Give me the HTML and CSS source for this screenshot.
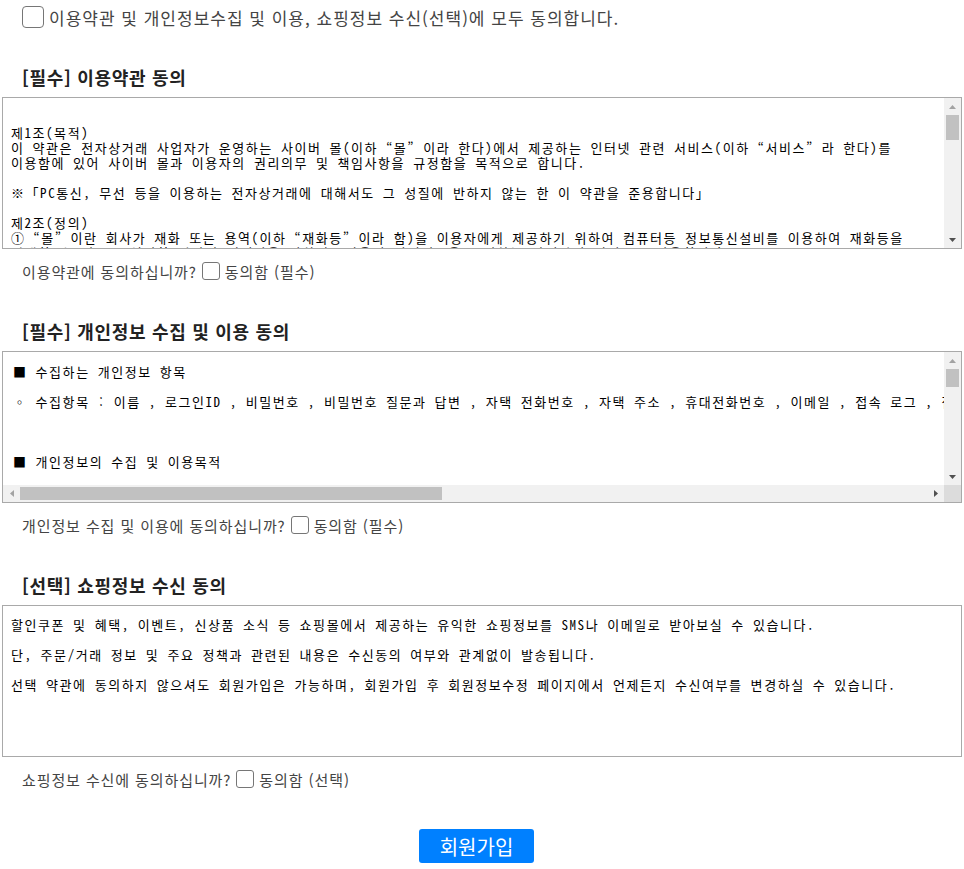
FILE: index.html
```html
<!DOCTYPE html>
<html lang="ko">
<head>
    <meta charset="UTF-8">
    <meta name="viewport" content="width=device-width, initial-scale=1.0">
    <title>회원가입 약관동의</title>
    <link rel="stylesheet" href="styles.css">
</head>
<body>
    <form class="agree-form">
        <!-- 전체 동의 -->
        <label class="agree-all">
            <input type="checkbox" class="chk chk-lg" id="agree-all">
            <span>이용약관 및 개인정보수집 및 이용, 쇼핑정보 수신(선택)에 모두 동의합니다.</span>
        </label>

        <!-- 이용약관 -->
        <div class="agree-section">
            <h3 class="section-title">[필수] 이용약관 동의</h3>
            <div class="terms-box box-v">
                <div class="terms-view terms-text">
제1조(목적)
이 약관은 전자상거래 사업자가 운영하는 사이버 몰(이하 “몰” 이라 한다)에서 제공하는 인터넷 관련 서비스(이하 “서비스” 라 한다)를 이용함에 있어 사이버 몰과 이용자의 권리의무 및 책임사항을 규정함을 목적으로 합니다.

※「PC통신, 무선 등을 이용하는 전자상거래에 대해서도 그 성질에 반하지 않는 한 이 약관을 준용합니다」

제2조(정의)
① “몰” 이란 회사가 재화 또는 용역(이하 “재화등” 이라 함)을 이용자에게 제공하기 위하여 컴퓨터등 정보통신설비를 이용하여 재화등을 거래할 수 있도록 설정한 가상의 영업장을 말하며, 아울러 사이버몰을 운영하는 사업자의 의미로도 사용합니다.
② “이용자” 란 “몰” 에 접속하여 이 약관에 따라 “몰” 이 제공하는 서비스를 받는 회원 및 비회원을 말합니다.
</div>
                <div class="vscroll">
                    <span class="sb-btn"><svg width="7" height="4" viewBox="0 0 7 4"><path d="M0 4L3.5 0L7 4z" fill="#a3a3a3"/></svg></span>
                    <span class="sb-track"><span class="sb-thumb thumb-v1"></span></span>
                    <span class="sb-btn"><svg width="7" height="4" viewBox="0 0 7 4"><path d="M0 0L3.5 4L7 0z" fill="#505050"/></svg></span>
                </div>
            </div>
            <label class="agree-check">
                <span>이용약관에 동의하십니까?</span>
                <input type="checkbox" class="chk">
                <span>동의함 (필수)</span>
            </label>
        </div>

        <!-- 개인정보 수집 및 이용 -->
        <div class="agree-section">
            <h3 class="section-title">[필수] 개인정보 수집 및 이용 동의</h3>
            <div class="terms-box box-hv">
                <div class="terms-view privacy-text">
                    <p>■ 수집하는 개인정보 항목</p>
                    <p>◦ 수집항목 : 이름 , 로그인ID , 비밀번호 , 비밀번호 질문과 답변 , 자택 전화번호 , 자택 주소 , 휴대전화번호 , 이메일 ,  접속 로그 , 접속 IP 정보 , 결제기록 , 쿠키 , 서비스 이용기록</p>
                    <p>&nbsp;</p>
                    <p>■ 개인정보의 수집 및 이용목적</p>
                    <p>회사는 수집한 개인정보를 다음의 목적을 위해 활용합니다.</p>
                </div>
                <div class="vscroll">
                    <span class="sb-btn"><svg width="7" height="4" viewBox="0 0 7 4"><path d="M0 4L3.5 0L7 4z" fill="#a3a3a3"/></svg></span>
                    <span class="sb-track"><span class="sb-thumb thumb-v2"></span></span>
                    <span class="sb-btn"><svg width="7" height="4" viewBox="0 0 7 4"><path d="M0 0L3.5 4L7 0z" fill="#505050"/></svg></span>
                </div>
                <div class="hscroll">
                    <span class="sb-btn"><svg width="4" height="7" viewBox="0 0 4 7"><path d="M4 0L0 3.5L4 7z" fill="#a3a3a3"/></svg></span>
                    <span class="sb-track"><span class="sb-thumb thumb-h"></span></span>
                    <span class="sb-btn"><svg width="4" height="7" viewBox="0 0 4 7"><path d="M0 0L4 3.5L0 7z" fill="#505050"/></svg></span>
                </div>
                <div class="sb-corner"></div>
            </div>
            <label class="agree-check">
                <span>개인정보 수집 및 이용에 동의하십니까?</span>
                <input type="checkbox" class="chk">
                <span>동의함 (필수)</span>
            </label>
        </div>

        <!-- 쇼핑정보 수신 -->
        <div class="agree-section">
            <h3 class="section-title">[선택] 쇼핑정보 수신 동의</h3>
            <div class="terms-box shopping-text">
                <p>할인쿠폰 및 혜택, 이벤트, 신상품 소식 등 쇼핑몰에서 제공하는 유익한 쇼핑정보를 SMS나 이메일로 받아보실 수 있습니다.</p>
                <p>단, 주문/거래 정보 및 주요 정책과 관련된 내용은 수신동의 여부와 관계없이 발송됩니다.</p>
                <p>선택 약관에 동의하지 않으셔도 회원가입은 가능하며, 회원가입 후 회원정보수정 페이지에서 언제든지 수신여부를 변경하실 수 있습니다.</p>
            </div>
            <label class="agree-check">
                <span>쇼핑정보 수신에 동의하십니까?</span>
                <input type="checkbox" class="chk">
                <span>동의함 (선택)</span>
            </label>
        </div>

        <div class="btn-area">
            <button type="button" class="btn-join">회원가입</button>
        </div>
    </form>
</body>
</html>
```

FILE: styles.css
```css
body {
    margin: 0;
    padding: 0 2px;
    background-color: #fff;
    font-family: "Noto Sans CJK KR", "Noto Sans", sans-serif;
    color: #333;
}
.agree-form {
    padding-top: 5px;
}
.agree-all {
    display: flex;
    align-items: center;
    gap: 5px;
    height: 24px;
    padding-left: 20px;
    font-size: 17px;
    letter-spacing: 1px;
    color: #444;
}
.chk {
    appearance: none;
    -webkit-appearance: none;
    margin: 0;
    width: 18px;
    height: 18px;
    border: 1px solid #767676;
    border-radius: 3px;
    background-color: #fff;
    flex-shrink: 0;
}
.chk-lg {
    width: 22px;
    height: 22px;
    border-radius: 4px;
}
.agree-section {
    margin-top: 36px;
}
.section-title {
    margin: 0 0 8px;
    padding-left: 20px;
    font-size: 18px;
    letter-spacing: 0.7px;
    line-height: 24px;
    font-weight: bold;
    color: #222;
}

/* 약관 박스 */
.terms-box {
    box-sizing: border-box;
    height: 152px;
    border: 1px solid #a9a9a9;
    background-color: #fff;
    font-family: "Noto Sans Mono CJK KR", "Noto Sans CJK KR", monospace;
    font-size: 13px;
    letter-spacing: 1.55px;
    color: #000;
    overflow: hidden;
    word-break: keep-all;
}
.terms-box p {
    margin: 0;
    line-height: 30px;
}
.box-v {
    display: grid;
    grid-template-columns: 1fr 17px;
}
.box-hv {
    display: grid;
    grid-template-columns: 1fr 17px;
    grid-template-rows: 1fr 17px;
}
.terms-view {
    overflow: hidden;
    min-width: 0;
}
.terms-text {
    white-space: pre-wrap;
    line-height: 15px;
    padding: 12px 20px 0 8px;
}
.privacy-text {
    white-space: nowrap;
    padding: 5px 10px 0;
}
.shopping-text {
    padding: 4px 8px 0;
}

/* 스크롤바 모양 */
.vscroll, .hscroll {
    display: flex;
    background-color: #f1f1f1;
}
.vscroll {
    flex-direction: column;
}
.sb-btn {
    display: flex;
    align-items: center;
    justify-content: center;
    width: 17px;
    height: 17px;
    flex-shrink: 0;
}
.sb-track {
    flex: 1;
    display: flex;
}
.vscroll .sb-track {
    flex-direction: column;
}
.sb-thumb {
    background-color: #c1c1c1;
}
.vscroll .sb-thumb {
    margin: 0 2px;
}
.hscroll .sb-thumb {
    margin: 2px 0;
}
.thumb-v1 {
    height: 25px;
}
.thumb-v2 {
    height: 18px;
}
.thumb-h {
    width: 422px;
}
.sb-corner {
    background-color: #dcdcdc;
}

.agree-check {
    display: flex;
    align-items: center;
    gap: 5px;
    height: 24px;
    margin-top: 10px;
    padding-left: 20px;
    font-size: 15px;
    letter-spacing: 0.9px;
    color: #444;
}
.btn-area {
    margin-top: 38px;
    text-align: center;
}
.btn-join {
    width: 115px;
    height: 34px;
    margin-right: 11px;
    padding: 0;
    border: none;
    border-radius: 3px;
    background-color: #0080ff;
    color: #fff;
    font-family: "Noto Sans CJK KR", sans-serif;
    font-size: 20px;
    cursor: pointer;
}
```
